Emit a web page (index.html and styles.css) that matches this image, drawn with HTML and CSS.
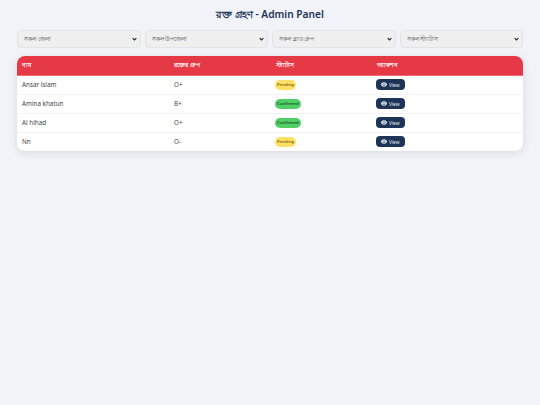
FILE: index.html
```html
<!DOCTYPE html>
<html lang="bn">
<head>
<meta charset="utf-8">
<title>রক্ত গ্রহণ - Admin Panel</title>
<link rel="stylesheet" href="styles.css">
</head>
<body>
<main class="page">
  <h1 class="title">রক্ত গ্রহণ - Admin Panel</h1>
  <div class="filters">
    <select class="filter"><option>সকল জেলা</option></select>
    <select class="filter"><option>সকল উপজেলা</option></select>
    <select class="filter"><option>সকল ব্লাড গ্রুপ</option></select>
    <select class="filter"><option>সকল স্ট্যাটাস</option></select>
  </div>
  <div class="card">
    <table class="table">
      <thead>
        <tr><th class="c1">নাম</th><th class="c2">রক্তের গ্রুপ</th><th class="c3">স্ট্যাটাস</th><th>অ্যাকশন</th></tr>
      </thead>
      <tbody>
        <tr><td>Ansar islam</td><td>O+</td><td><span class="badge pending">Pending</span></td><td><button class="view"><svg class="eye" viewBox="0 0 16 12"><path d="M8 0C4.4 0 1.4 2.4 0 6c1.4 3.600 4.400 6 8 6s6.600-2.400 8-6c-1.400-3.600-4.400-6-8-6zm0 10a4 4 0 1 1 0-8 4 4 0 0 1 0 8zm0-6.400a2.400 2.400 0 1 0 0 4.800 2.400 2.400 0 0 0 0-4.800z"/></svg>View</button></td></tr>
        <tr><td>Amina khatun</td><td>B+</td><td><span class="badge confirmed">Confirmed</span></td><td><button class="view"><svg class="eye" viewBox="0 0 16 12"><path d="M8 0C4.4 0 1.4 2.4 0 6c1.4 3.600 4.400 6 8 6s6.600-2.400 8-6c-1.400-3.600-4.400-6-8-6zm0 10a4 4 0 1 1 0-8 4 4 0 0 1 0 8zm0-6.400a2.400 2.400 0 1 0 0 4.800 2.400 2.400 0 0 0 0-4.800z"/></svg>View</button></td></tr>
        <tr><td>Al hihad</td><td>O+</td><td><span class="badge confirmed">Confirmed</span></td><td><button class="view"><svg class="eye" viewBox="0 0 16 12"><path d="M8 0C4.4 0 1.4 2.4 0 6c1.4 3.600 4.400 6 8 6s6.600-2.400 8-6c-1.400-3.600-4.400-6-8-6zm0 10a4 4 0 1 1 0-8 4 4 0 0 1 0 8zm0-6.400a2.400 2.400 0 1 0 0 4.800 2.400 2.400 0 0 0 0-4.800z"/></svg>View</button></td></tr>
        <tr><td>Nn</td><td>O-</td><td><span class="badge pending">Pending</span></td><td><button class="view"><svg class="eye" viewBox="0 0 16 12"><path d="M8 0C4.4 0 1.4 2.4 0 6c1.4 3.600 4.400 6 8 6s6.600-2.400 8-6c-1.400-3.600-4.400-6-8-6zm0 10a4 4 0 1 1 0-8 4 4 0 0 1 0 8zm0-6.400a2.400 2.400 0 1 0 0 4.800 2.400 2.400 0 0 0 0-4.800z"/></svg>View</button></td></tr>
      </tbody>
    </table>
  </div>
</main>
</body>
</html>
```
FILE: styles.css
```css
* { box-sizing: border-box; }
html, body { margin: 0; height: 100%; }
body {
  background: #f1f3f8;
  color: #333;
  font-family: "Noto Sans", "Open Sans", "DejaVu Sans", sans-serif;
}
.page { padding: 8px 17px 0; }
.title {
  margin: 0;
  height: 22px;
  line-height: 13px;
  text-align: center;
  font-size: 10.200px;
  font-weight: 600;
  color: #1d3557;
}
.filters {
  display: grid;
  grid-template-columns: repeat(4, 1fr);
  gap: 4px;
  margin-bottom: 8px;
}
.filter {
  appearance: none;
  width: 100%;
  height: 18px;
  padding: 0 6px;
  font-family: inherit;
  font-size: 6px;
  color: #555;
  background: #efefef url("data:image/svg+xml,%3Csvg xmlns='http://www.w3.org/2000/svg' viewBox='0 0 8 6'%3E%3Cpath d='M1 1.500l3 3 3-3' fill='none' stroke='%23222' stroke-width='1.800'/%3E%3C/svg%3E") no-repeat right 3px center / 5px 4px;
  border: 1px solid #e2e4e8;
  border-radius: 4px;
}
.card {
  background: #fff;
  border-radius: 8px;
  overflow: hidden;
  box-shadow: 0 2px 8px rgba(0, 0, 0, 0.1);
}
.table {
  width: 100%;
  border-collapse: collapse;
  table-layout: fixed;
  font-size: 6.300px;
}
.table th {
  height: 19px;
  padding: 0 5px;
  text-align: left;
  font-weight: 600;
  font-size: 6px;
  color: #fff;
  background: #e63946;
  border-bottom: 1px solid #ef6a75;
}
.table td {
  height: 19px;
  padding: 0 5px;
  border-bottom: 1px solid #f3f3f3;
  color: #444;
}
.table tr:last-child td { border-bottom: 0; }
.c1 { width: 152px; }
.c2 { width: 102px; }
.c3 { width: 101px; }
.badge {
  display: inline-block;
  height: 10px;
  margin-left: -1px;
  padding: 0 2px;
  line-height: 10px;
  font-size: 4.200px;
  font-weight: 600;
  border-radius: 5px;
  vertical-align: middle;
}
.pending { background: #ffe066; color: #856404; }
.confirmed { background: #51cf66; color: #14532d; }
.view {
  display: inline-flex;
  align-items: center;
  gap: 2px;
  width: 29px;
  height: 11px;
  margin-left: -1px;
  padding: 0 0 0 5px;
  border: 0;
  border-radius: 4px;
  background: #1d3557;
  color: #e8ecf2;
  font-family: inherit;
  font-size: 4.800px;
  vertical-align: middle;
}
.eye { width: 6px; height: 5px; fill: #fff; }
```
